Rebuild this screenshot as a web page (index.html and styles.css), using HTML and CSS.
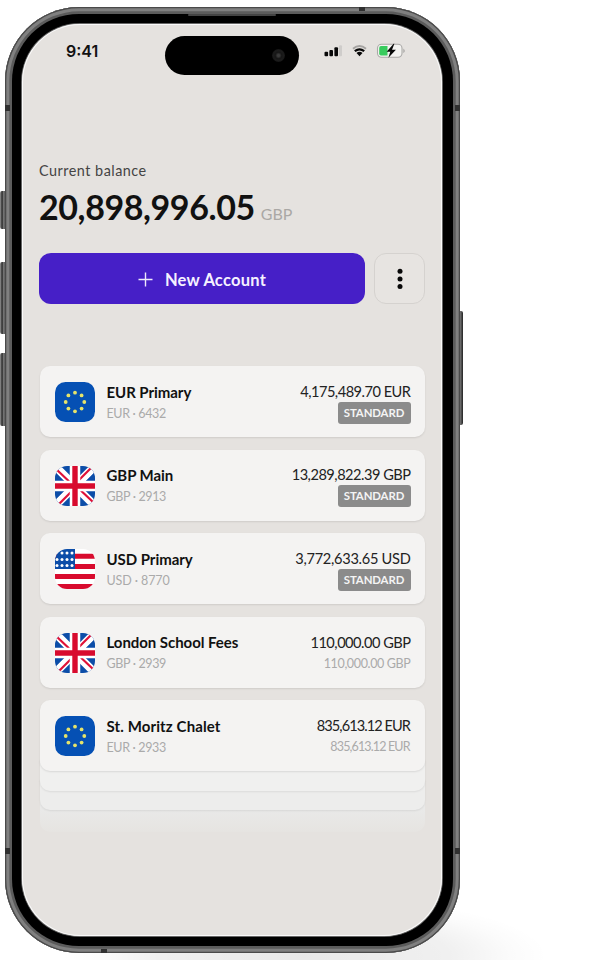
FILE: index.html
```html
<!DOCTYPE html>
<html lang="en">
<head>
<meta charset="utf-8">
<title>Accounts</title>
<link rel="stylesheet" href="styles.css">
</head>
<body>
<svg width="0" height="0" class="defs" aria-hidden="true">
  <defs>
    <clipPath id="tile"><rect width="40" height="40" rx="12"/></clipPath>
    <symbol id="eu" viewBox="0 0 40 40">
      <rect width="40" height="40" rx="10.5" fill="#0550b4"/>
      <g fill="#e6e36a"><circle cx="20" cy="10.7" r="1.9"/><circle cx="26.6" cy="13.4" r="1.9"/><circle cx="29.3" cy="20" r="1.9"/><circle cx="26.6" cy="26.6" r="1.9"/><circle cx="20" cy="29.3" r="1.9"/><circle cx="13.4" cy="26.6" r="1.9"/><circle cx="10.7" cy="20" r="1.9"/><circle cx="13.4" cy="13.4" r="1.9"/></g>
    </symbol>
    <symbol id="uk" viewBox="0 0 40 40">
      <g clip-path="url(#tile)">
        <rect width="40" height="40" fill="#0c4da8"/>
        <path d="M0 0L40 40M40 0L0 40" stroke="#fff" stroke-width="8"/>
        <path d="M1 3L20 21M39 37L20 19M37 1L20 18M3 39L20 22" stroke="#df1238" stroke-width="2.2"/>
        <path d="M20 0V40M0 20H40" stroke="#fff" stroke-width="10.5"/>
        <path d="M20 0V40M0 20H40" stroke="#d80b2e" stroke-width="5.4"/>
      </g>
    </symbol>
    <symbol id="us" viewBox="0 0 40 40">
      <g clip-path="url(#tile)">
        <rect width="40" height="40" fill="#fff"/>
        <path d="M0 7.2H40M0 17.6H40M0 27.6H40M0 37.5H40" stroke="#d80b2e" stroke-width="5"/>
        <rect width="20" height="20" fill="#0c4da8"/>
        <g fill="#fff"><circle cx="7" cy="4" r="1.5"/><circle cx="12" cy="4" r="1.5"/><circle cx="17" cy="4" r="1.5"/><circle cx="2" cy="10.5" r="1.5"/><circle cx="7" cy="10.5" r="1.5"/><circle cx="12" cy="10.5" r="1.5"/><circle cx="17" cy="10.5" r="1.5"/><circle cx="2" cy="16.5" r="1.5"/><circle cx="7" cy="16.5" r="1.5"/><circle cx="12" cy="16.5" r="1.5"/><circle cx="17" cy="16.5" r="1.5"/></g>
      </g>
    </symbol>
  </defs>
</svg>
<div class="stage">
  <div class="glow"></div>
  <div class="key key-action"></div>
  <div class="key key-up"></div>
  <div class="key key-down"></div>
  <div class="key key-power"></div>
  <div class="phone">
    <i class="band band-tl"></i><i class="band band-tr"></i><i class="band band-bl"></i><i class="band band-br"></i>
    <i class="band band-top"></i><i class="band band-bottom"></i>
    <div class="bezel">
      <i class="speaker"></i>
      <main class="screen">
        <header class="status">
          <span class="time">9:41</span>
          <div class="island"><i class="lens"></i></div>
          <svg class="indicators" width="84" height="18" viewBox="0 0 84 18">
            <g fill="#080808"><rect x="1.5" y="9.8" width="3.6" height="4.4" rx="1"/><rect x="6.4" y="8" width="3.6" height="6.2" rx="1"/><rect x="11.4" y="5.3" width="3.6" height="8.9" rx="1"/></g>
            <rect x="16" y="3.3" width="3" height="10.9" rx="1" fill="#cfcdcb"/>
            <path d="M30 6.7Q36.5 1.4 43 6.7" fill="none" stroke="#a5a3a1" stroke-width="2"/>
            <path d="M31.8 9.2Q36.5 5.4 41.2 9.2" fill="none" stroke="#080808" stroke-width="2.2"/>
            <path d="M33.5 11Q36.5 8.5 39.5 11L36.5 14.2Z" fill="#080808"/>
            <rect x="54.5" y="2.3" width="24.5" height="13" rx="4" fill="#f4f3f1" stroke="#aaa9a7" stroke-width="1.1"/>
            <path d="M58 4.1H64.5V13.5H58Q56.2 13.5 56.2 11.7V5.9Q56.2 4.1 58 4.1Z" fill="#38cb5d"/>
            <path d="M80.3 6.4Q83.4 8.8 80.3 11.2Z" fill="#aaa9a7"/>
            <path d="M70.6 1.8L63.6 9.8H67.3L65.4 15.8L72.9 7.8H69L71.4 1.8Z" fill="#080808"/>
          </svg>
        </header>

        <section class="summary">
          <div class="label">Current balance</div>
          <div class="balance"><span class="total">20,898,996.05</span><span class="unit">GBP</span></div>
        </section>

        <div class="actions">
          <button class="new"><svg width="15" height="15" viewBox="0 0 15 15"><path d="M7.5 .5V14.5M.5 7.5H14.5" stroke="#eee9fb" stroke-width="1.4"/></svg><span>New Account</span></button>
          <button class="more" aria-label="More"><svg width="6" height="22" viewBox="0 0 6 22"><g fill="#080808"><circle cx="3" cy="3.2" r="2.5"/><circle cx="3" cy="10.9" r="2.5"/><circle cx="3" cy="18.6" r="2.5"/></g></svg></button>
        </div>

        <section class="accounts">
          <article class="card">
            <svg class="flag"><use href="#eu"/></svg>
            <div class="info"><div class="name">EUR Primary</div><div class="sub">EUR · 6432</div></div>
            <div class="money"><div class="amount">4,175,489.70 EUR</div><div class="badge">STANDARD</div></div>
          </article>
          <article class="card">
            <svg class="flag"><use href="#uk"/></svg>
            <div class="info"><div class="name">GBP Main</div><div class="sub">GBP · 2913</div></div>
            <div class="money"><div class="amount">13,289,822.39 GBP</div><div class="badge">STANDARD</div></div>
          </article>
          <article class="card">
            <svg class="flag"><use href="#us"/></svg>
            <div class="info"><div class="name">USD Primary</div><div class="sub loose">USD · 8770</div></div>
            <div class="money"><div class="amount loose">3,772,633.65 USD</div><div class="badge">STANDARD</div></div>
          </article>
          <article class="card">
            <svg class="flag"><use href="#uk"/></svg>
            <div class="info"><div class="name">London School Fees</div><div class="sub">GBP · 2939</div></div>
            <div class="money"><div class="amount">110,000.00 GBP</div><div class="sub">110,000.00 GBP</div></div>
          </article>
          <div class="pile">
            <article class="card">
              <svg class="flag"><use href="#eu"/></svg>
              <div class="info"><div class="name wide">St. Moritz Chalet</div><div class="sub">EUR · 2933</div></div>
              <div class="money"><div class="amount tight">835,613.12 EUR</div><div class="sub tight">835,613.12 EUR</div></div>
            </article>
            <div class="sheet sheet-1"></div>
            <div class="sheet sheet-2"></div>
            <div class="sheet sheet-3"></div>
          </div>
        </section>
      </main>
    </div>
  </div>
</div>
</body>
</html>
```
FILE: styles.css
```css
* { box-sizing: border-box; }
html, body { margin: 0; height: 960px; overflow: hidden; background: #fff; }
body { font-family: Lato, "Liberation Sans", sans-serif; color: #111; }
.defs { position: absolute; }
.stage { position: relative; width: 592px; height: 960px; padding: 6.5px 0 0 4.5px; overflow: hidden; }
.glow {
  position: absolute; left: 60px; top: 896px; width: 488px; height: 120px;
  background: radial-gradient(closest-side, rgba(0,0,0,.09), rgba(0,0,0,.06) 60%, rgba(0,0,0,.015) 85%, transparent);
}
.key { position: absolute; left: 0; width: 6px; background: linear-gradient(90deg, #999 0, #2a2a2a 35%, #777 60%, #444); border-radius: 2px 0 0 2px; }
.key-action { top: 191px; height: 38px; }
.key-up { top: 262px; height: 72px; }
.key-down { top: 353px; height: 73px; }
.key-power { left: 457px; top: 311px; height: 114px; border-radius: 0 2px 2px 0; background: linear-gradient(90deg, #444, #777 50%, #222); }
.phone {
  position: relative; width: 455px; height: 946px; border-radius: 74px; padding: 7px;
  background: #5c5c5c;
  box-shadow: inset 0 0 0 1.3px #4a4a4a, inset 0 0 0 4.3px #808080, inset 0 0 0 5.5px #5c5c5c;
}
.band { position: absolute; width: 5px; height: 6px; background: #303030; }
.band-tl { left: 0; top: 98px; }
.band-tr { right: 0; top: 98px; }
.band-bl { left: 0; top: 841px; }
.band-br { right: 0; top: 841px; }
.band-top { left: 354px; top: 0; width: 6px; height: 4px; }
.band-bottom { left: 96px; bottom: 0; width: 6px; height: 4px; }
.bezel { position: relative; height: 100%; border-radius: 67px; background: #000; padding: 10px 10.5px 9.5px; }
.speaker { position: absolute; left: 176px; top: 0; width: 88px; height: 2px; background: #444; border-radius: 1px; }
.screen {
  height: 100%; border-radius: 58px; background: #e5e2df; padding: 0 17px;
  box-shadow: 0 0 0 1px #666, inset 0 0 0 1px #fafafa; overflow: hidden;
}
.status { display: flex; height: 55px; margin: 0 -17px; padding: 12.5px 34px 0 44px; align-items: flex-start; }
.time { font: 600 16px/30px Inter, sans-serif; width: 99px; color: #111; }
.island { width: 134px; height: 39px; border-radius: 20px; background: #000; padding: 13px 0 0 107px; }
.lens { display: block; width: 13px; height: 13px; border-radius: 50%; background: radial-gradient(circle, #3a3a3a 0 12%, #161616 35%, #1c1c1c 55%, #080808); }
.indicators { margin: 5.5px 0 0 23.5px; flex: none; }
.summary { padding-top: 83px; height: 174.5px; }
.label { font-size: 14.4px; line-height: 18px; color: #444; letter-spacing: .5px; }
.balance { display: flex; align-items: baseline; gap: 6px; margin-top: 5px; line-height: 44px; }
.total { font-size: 34px; font-weight: 700; letter-spacing: -.42px; }
.unit { font-size: 16px; color: #aaa8a5; }
.actions { display: flex; gap: 9px; height: 51px; }
button { font: inherit; border: 0; padding: 0; display: flex; align-items: center; justify-content: center; }
.new { width: 326px; border-radius: 12px; background: #461fc7; color: #f5f1ff; gap: 12px; font-size: 16.5px; font-weight: 700; letter-spacing: .25px; padding-top: 2px; }
.more { width: 51px; border-radius: 12px; background: #e7e4e1; border: 1.5px solid #d5d2cf; }
.accounts { display: flex; flex-direction: column; gap: 12.5px; padding-top: 62px; margin-left: 1px; }
.card {
  display: flex; align-items: center; height: 71px; width: 385px; padding: 1px 14.5px 0 15px; border-radius: 10px;
  background: #f4f3f2; box-shadow: 0 1px 2px rgba(0,0,0,.1);
}
.flag { width: 40px; height: 40px; flex: none; }
.info { flex: 1; padding-left: 11.5px; }
.name { font-size: 15px; font-weight: 700; line-height: 22px; white-space: nowrap; letter-spacing: -.05px; }
.name.wide { letter-spacing: .12px; }
.sub { font-size: 12.5px; line-height: 21px; color: #aaa; white-space: nowrap; letter-spacing: -.35px; }
.sub.loose { letter-spacing: -.1px; }
.sub.tight { letter-spacing: -.85px; margin-right: .8px; }
.money { display: flex; flex-direction: column; align-items: flex-end; }
.amount { font-size: 14.6px; line-height: 21px; color: #222; white-space: nowrap; letter-spacing: -.5px; }
.amount.loose { letter-spacing: -.28px; }
.amount.tight { letter-spacing: -.95px; margin-right: .5px; }
.badge { width: 73px; height: 22px; border-radius: 3px; background: #8b8b8b; color: #f4f4f4; font-size: 11.4px; font-weight: 700; line-height: 22px; text-align: center; letter-spacing: -.1px; }
.pile { display: flex; flex-direction: column; width: 385px; }
.pile .card { position: relative; z-index: 4; }
.sheet { position: relative; margin-top: -12px; border-radius: 0 0 10px 10px; box-shadow: 0 1px 2px rgba(0,0,0,.08); }
.sheet-1 { z-index: 3; height: 32px; background: #f0f0ef; }
.sheet-2 { z-index: 2; height: 31px; background: #ededec; }
.sheet-3 { z-index: 1; height: 34px; background: linear-gradient(#e9e9e8 35%, #e6e4e1); box-shadow: none; }
```
